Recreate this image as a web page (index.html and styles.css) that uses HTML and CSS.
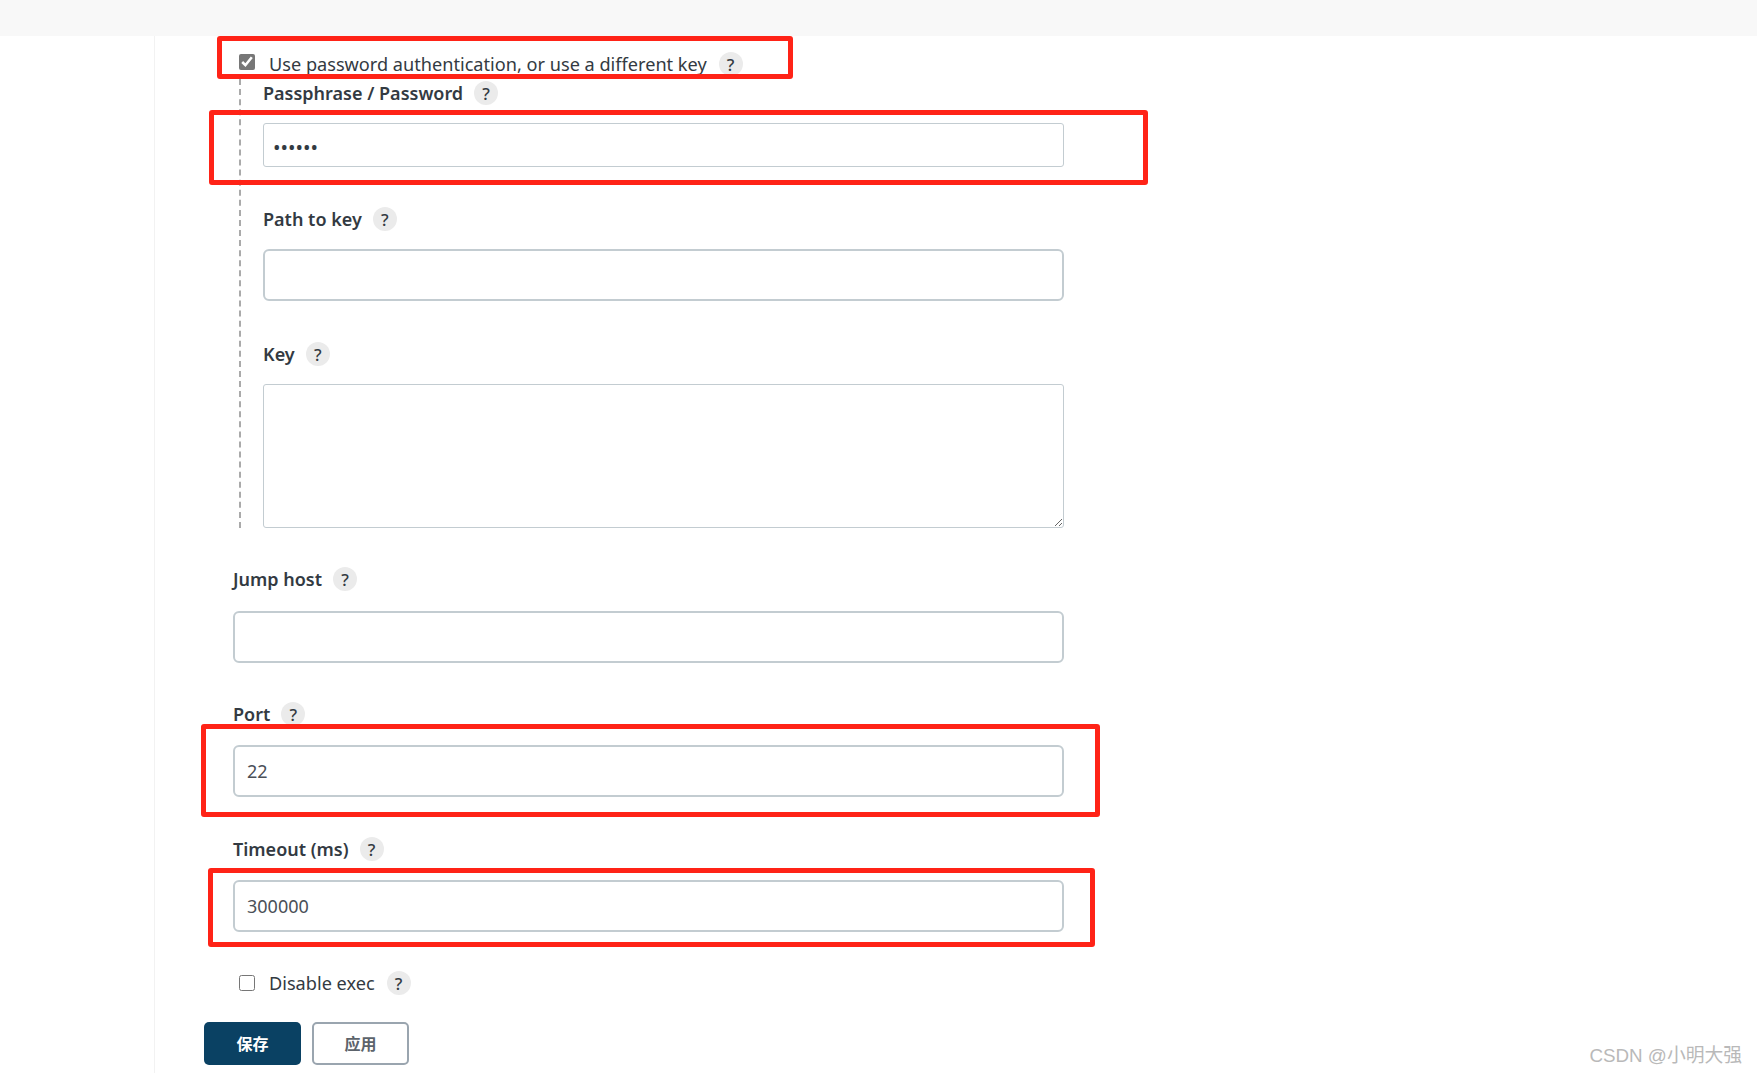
FILE: index.html
```html
<!DOCTYPE html>
<html lang="zh">
<head>
<meta charset="utf-8">
<title>SSH Server</title>
<link rel="stylesheet" href="styles.css">
</head>
<body>
<div class="topbar"></div>
<main class="main">
  <form class="form">
    <label class="check-row check-first">
      <input type="checkbox" class="check check-up" checked>
      <span>Use password authentication, or use a different key</span>
      <span class="help">?</span>
    </label>
    <section class="nested">
      <div class="field">
        <div class="label"><span>Passphrase / Password</span><span class="help">?</span></div>
        <input type="password" class="input input-thin" value="123456">
      </div>
      <div class="field field-wide">
        <div class="label"><span>Path to key</span><span class="help">?</span></div>
        <input type="text" class="input">
      </div>
      <div class="field field-last">
        <div class="label"><span>Key</span><span class="help">?</span></div>
        <textarea class="textarea"></textarea>
      </div>
    </section>
    <div class="field field-jump">
      <div class="label"><span>Jump host</span><span class="help">?</span></div>
      <input type="text" class="input">
    </div>
    <div class="field field-loose">
      <div class="label"><span>Port</span><span class="help">?</span></div>
      <input type="text" class="input" value="22">
    </div>
    <div class="field field-loose field-timeout">
      <div class="label"><span>Timeout (ms)</span><span class="help">?</span></div>
      <input type="text" class="input" value="300000">
    </div>
    <label class="check-row">
      <input type="checkbox" class="check">
      <span>Disable exec</span>
      <span class="help">?</span>
    </label>
    <div class="actions">
      <button type="button" class="btn btn-primary">保存</button>
      <button type="button" class="btn btn-secondary">应用</button>
    </div>
  </form>
</main>
<div class="mark mark-1"></div>
<div class="mark mark-2"></div>
<div class="mark mark-3"></div>
<div class="mark mark-4"></div>
<div class="watermark">CSDN @小明大强</div>
</body>
</html>
```
FILE: styles.css
```css
* { box-sizing: border-box; }
html, body { margin: 0; height: 1073px; overflow: hidden; background: #fff; }
body {
  position: relative;
  font-family: "Noto Sans", "Open Sans", "Noto Sans CJK SC", sans-serif;
  font-size: 18.15px;
  color: #333a42;
}
.topbar { height: 36px; background: #f8f8f8; }
.main {
  margin-left: 154px;
  height: 1037px;
  border-left: 1px solid #f2f2f2;
}
.form { padding: 16px 0 0 78px; width: 909px; }
.check-row {
  display: flex;
  align-items: center;
  height: 24px;
  margin-left: 6px;
}
.check-first { margin-bottom: 3px; }
.check {
  width: 16px;
  height: 16px;
  margin: 0 14px 0 0;
  accent-color: #777;
  flex: none;
}
.check-up { margin-bottom: 4px; }
.help {
  display: inline-flex;
  align-items: center;
  justify-content: center;
  width: 24px;
  height: 24px;
  margin-left: 12px;
  border-radius: 50%;
  background: #ebebeb;
  font-size: 17px;
  font-weight: 500;
}
.label .help { margin-left: 11px; }
.nested {
  margin: 0 0 39px 6px;
  padding: 2px 0 0 22px;
  border-left: 2px dashed #aaa;
}
.field { margin-bottom: 40px; }
.field-wide { margin-bottom: 41px; }
.field-last { margin-bottom: 0; }
.field-jump { margin-bottom: 39px; }
.field-timeout { margin-bottom: 39px; }
.label {
  display: flex;
  align-items: center;
  height: 24px;
  margin-bottom: 18px;
  font-weight: 650;
  font-size: 18px;
}
.field-jump .label { margin-bottom: 20px; }
.field-loose .label { margin-bottom: 19px; }
.input, .textarea {
  display: block;
  width: 100%;
  font-family: inherit;
  font-size: 18px;
  color: #4a4f57;
  background: #fff;
  outline: none;
}
.input {
  height: 52px;
  padding: 0 12px;
  border: 2px solid #c3ccd1;
  border-radius: 6px;
}
.input-thin {
  height: 44px;
  padding: 5px 9px 0;
  border: 1px solid #c3ccd1;
  border-radius: 3px;
  font-size: 20px;
  color: #333a42;
}
.textarea {
  height: 144px;
  padding: 8px;
  border: 1px solid #c3ccd1;
  border-radius: 3px;
}
.actions {
  display: flex;
  gap: 11px;
  margin: 27px 0 0 -29px;
}
.btn {
  width: 97px;
  height: 43px;
  padding: 0 0 2px;
  border-radius: 5px;
  font-family: "Noto Sans CJK SC", sans-serif;
  font-size: 16px;
  font-weight: 700;
}
.btn-primary { background: #0a4163; border: 0; color: #fff; }
.btn-secondary { background: #fff; border: 2px solid #9aa5af; color: #5c636b; }
.mark {
  position: absolute;
  border: 5px solid #ff2317;
  border-radius: 3px;
}
.mark-1 { left: 217px; top: 36px; width: 576px; height: 43px; }
.mark-2 { left: 209px; top: 110px; width: 939px; height: 75px; }
.mark-3 { left: 201px; top: 724px; width: 899px; height: 93px; }
.mark-4 { left: 208px; top: 868px; width: 887px; height: 79px; }
.watermark {
  position: absolute;
  right: 15px;
  top: 1040px;
  font-family: "Liberation Sans", "Noto Sans CJK SC", sans-serif;
  font-size: 18.8px;
  color: #b9b9b9;
}
```
